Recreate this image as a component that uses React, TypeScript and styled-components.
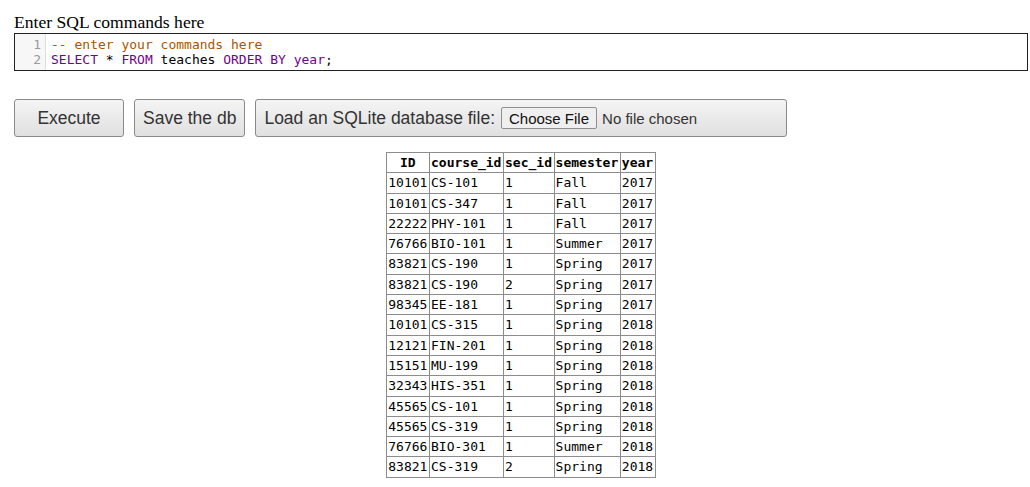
import React from "react";
import styled, { createGlobalStyle } from "styled-components";

const Global = createGlobalStyle`
  html, body { margin: 0; padding: 0; background: #fff; }
  body { font-family: "Liberation Serif", "Times New Roman", serif; color: #000; }
`;

const Page = styled.div`
  width: 1014px;
  margin-left: 14px;
  padding-top: 12px;
`;

const Title = styled.div`
  font-family: "Liberation Serif", serif;
  font-size: 17.6px;
  line-height: 20px;
  margin-bottom: 1px;
`;

const Editor = styled.div`
  display: flex;
  border: 1px solid #222;
  height: 36px;
  font-family: "DejaVu Sans Mono", "Liberation Mono", monospace;
  font-size: 13px;
  line-height: 15px;
`;

const Gutter = styled.div`
  width: 31px;
  background: #f7f7f7;
  border-right: 1px solid #ddd;
  padding-top: 3px;
  box-sizing: border-box;
  text-align: right;
  color: #999;
  padding-right: 4px;
`;

const Code = styled.div`
  padding: 3px 0 0 5px;
  white-space: pre;
`;

const Tok = styled.span<{ $c?: string }>`
  color: ${(p) => p.$c || "#000"};
`;

const Toolbar = styled.div`
  display: flex;
  align-items: center;
  margin-top: 28px;
  gap: 10px;
`;

const Button = styled.div<{ $w?: number; $pad?: number }>`
  box-sizing: border-box;
  height: 38px;
  ${(p) => (p.$w ? `width: ${p.$w}px;` : "")}
  padding: 0 ${(p) => p.$pad ?? 8}px;
  display: flex;
  align-items: center;
  justify-content: ${(p) => (p.$w ? "center" : "flex-start")};
  border: 1px solid #8a8a8a;
  border-radius: 3px;
  background: linear-gradient(#f4f4f4, #e0e0e0);
  font-family: "Liberation Sans", Arial, sans-serif;
  font-size: 17.5px;
  color: #333;
`;

const LoadInner = styled.span`
  margin-right: auto;
  display: flex;
  align-items: center;
`;

const FileButton = styled.span`
  margin-left: 6px;
  height: 22px;
  box-sizing: border-box;
  padding: 0 7px;
  display: inline-flex;
  align-items: center;
  border: 1px solid #8f8f8f;
  border-radius: 2px;
  background: #efefef;
  font-size: 15px;
  color: #111;
`;

const FileLabel = styled.span`
  margin-left: 5px;
  font-size: 15px;
  color: #333;
`;

const TableWrap = styled.div`
  display: flex;
  justify-content: center;
  margin-top: 15px;
`;

const Table = styled.table`
  border-collapse: collapse;
  font-family: "DejaVu Sans Mono", "Liberation Mono", monospace;
  font-size: 13px;
`;

const Th = styled.th`
  border: 1px solid #8c8c8c;
  padding: 1px 1.6px 1px 1px;
  line-height: 17.3px;
  font-weight: bold;
  text-align: center;
`;

const Td = styled.td`
  border: 1px solid #8c8c8c;
  padding: 1px 1.6px 1px 1px;
  line-height: 17.3px;
  text-align: left;
  white-space: nowrap;
`;

const cols = ["ID", "course_id", "sec_id", "semester", "year"];
const rows = [
  ["10101", "CS-101", "1", "Fall", "2017"],
  ["10101", "CS-347", "1", "Fall", "2017"],
  ["22222", "PHY-101", "1", "Fall", "2017"],
  ["76766", "BIO-101", "1", "Summer", "2017"],
  ["83821", "CS-190", "1", "Spring", "2017"],
  ["83821", "CS-190", "2", "Spring", "2017"],
  ["98345", "EE-181", "1", "Spring", "2017"],
  ["10101", "CS-315", "1", "Spring", "2018"],
  ["12121", "FIN-201", "1", "Spring", "2018"],
  ["15151", "MU-199", "1", "Spring", "2018"],
  ["32343", "HIS-351", "1", "Spring", "2018"],
  ["45565", "CS-101", "1", "Spring", "2018"],
  ["45565", "CS-319", "1", "Spring", "2018"],
  ["76766", "BIO-301", "1", "Summer", "2018"],
  ["83821", "CS-319", "2", "Spring", "2018"],
];

export default function App() {
  return (
    <>
      <Global />
      <Page>
        <Title>Enter SQL commands here</Title>
        <Editor>
          <Gutter>
            <div>1</div>
            <div>2</div>
          </Gutter>
          <Code>
            <div>
              <Tok $c="#a50">-- enter your commands here</Tok>
            </div>
            <div>
              <Tok $c="#708">SELECT</Tok> * <Tok $c="#708">FROM</Tok> teaches{" "}
              <Tok $c="#708">ORDER</Tok> <Tok $c="#708">BY</Tok>{" "}
              <Tok $c="#708">year</Tok>;
            </div>
          </Code>
        </Editor>
        <Toolbar>
          <Button $w={110}>Execute</Button>
          <Button $pad={8}>Save the db</Button>
          <Button $w={532}>
            <LoadInner>
              Load an SQLite database file:
              <FileButton>Choose File</FileButton>
              <FileLabel>No file chosen</FileLabel>
            </LoadInner>
          </Button>
        </Toolbar>
        <TableWrap>
          <Table>
            <thead>
              <tr>
                {cols.map((c) => (
                  <Th key={c}>{c}</Th>
                ))}
              </tr>
            </thead>
            <tbody>
              {rows.map((r, i) => (
                <tr key={i}>
                  {r.map((v, j) => (
                    <Td key={j}>{v}</Td>
                  ))}
                </tr>
              ))}
            </tbody>
          </Table>
        </TableWrap>
      </Page>
    </>
  );
}
